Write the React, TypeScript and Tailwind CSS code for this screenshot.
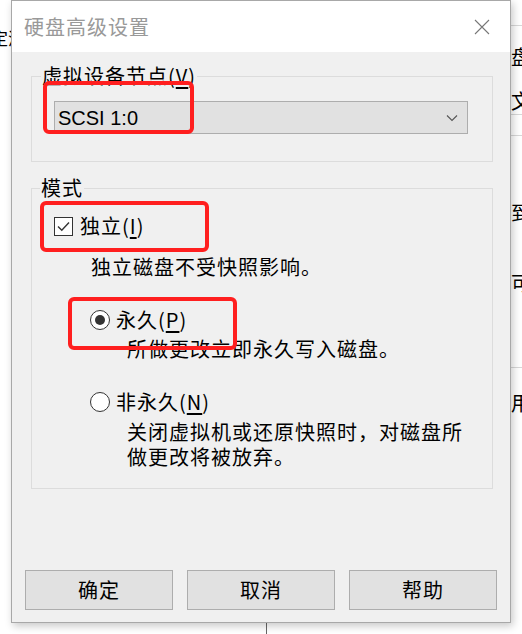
import React from 'react';

const cjk = "font-['Noto_Sans_CJK_SC',sans-serif]";

const Radio: React.FC<{ checked?: boolean }> = ({ checked }) => (
  <span className="w-[20px] h-[20px] rounded-full border border-[#333] bg-white flex items-center justify-center shrink-0">
    {checked && <span className="w-[10px] h-[10px] rounded-full bg-[#333]" />}
  </span>
);

const App: React.FC = () => {
  return (
    <div className={`relative w-[522px] h-[634px] bg-white overflow-hidden text-black ${cjk}`}>
      {/* page behind the dialog */}
      <span className="absolute left-[-9px] top-[28px] text-[17px] leading-[20px]">定涉</span>
      <div className="absolute left-[510px] top-[25px] w-[12px] h-px bg-[#d8d8d8]" />
      <div className="absolute left-[510px] top-[114px] w-[12px] h-px bg-[#d8d8d8]" />
      <div className="absolute left-[510px] top-[135px] w-[12px] h-px bg-[#d8d8d8]" />
      <div className="absolute left-[510px] top-[367px] w-[12px] h-px bg-[#d8d8d8]" />
      <span className="absolute left-[511px] top-[46px] text-[20px] leading-[22px]">盘</span>
      <span className="absolute left-[511px] top-[90px] text-[20px] leading-[22px]">文</span>
      <span className="absolute left-[511px] top-[202px] text-[20px] leading-[22px]">到</span>
      <span className="absolute left-[511px] top-[272px] text-[20px] leading-[22px]">可</span>
      <span className="absolute left-[511px] top-[392px] text-[20px] leading-[22px]">用</span>
      <div className="absolute left-[266px] top-[620px] w-px h-[14px] bg-[#666]" />

      {/* dialog window */}
      <div className="absolute left-[11px] top-0 w-[500px] h-[623px] border border-[#a8a8a8] bg-[#f0f0f0] shadow-[2px_3px_8px_rgba(0,0,0,0.22)] flex flex-col">
        <div className="h-[51px] bg-white flex items-center justify-between pl-[12px] pr-[20px] shrink-0">
          <span className="text-[20px] tracking-[1px] text-[#999] leading-[26px]">硬盘高级设置</span>
          <svg width="16" height="16" viewBox="0 0 16 16" className="mt-[1px]">
            <path d="M1 1 L15 15 M15 1 L1 15" stroke="#777" strokeWidth="1.1" fill="none" />
          </svg>
        </div>

        <div className="flex-1 flex flex-col px-[19px] pt-[11px] text-[20px] tracking-[1px]">
          <fieldset className="border border-[#dcdcdc] pl-[22px] pr-[24px] pt-[12px] pb-[27px] ml-0 w-[462px]">
            <legend className="ml-[-13px] px-[1px] leading-[26px]">
              虚拟设备节点(<u className="underline-offset-[3px]">V</u>)
            </legend>
            <div className="h-[33px] bg-[#e1e1e1] border border-[#adadad] flex items-center justify-between pl-[3px] pr-[9px]">
              <span className="font-['Liberation_Sans',sans-serif] text-[20px] tracking-normal">SCSI 1:0</span>
              <svg width="12" height="8" viewBox="0 0 12 8">
                <path d="M1 1.5 L6 6.5 L11 1.5" stroke="#555" strokeWidth="1.1" fill="none" />
              </svg>
            </div>
          </fieldset>

          <fieldset className="mt-[13px] border border-[#dcdcdc] pl-[22px] pr-[10px] pt-[12px] pb-[19px] w-[462px]">
            <legend className="ml-[-14px] px-[1px] leading-[26px]">模式</legend>

            <div className="flex items-center h-[26px]">
              <span className="w-[19px] h-[19px] border border-[#333] bg-white flex items-center justify-center shrink-0">
                <svg width="15" height="15" viewBox="0 0 15 15">
                  <path d="M2 7.5 L5.8 11.2 L13 3.6" stroke="#333" strokeWidth="1.4" fill="none" />
                </svg>
              </span>
              <span className="ml-[7px] leading-[26px]">
                独立(<u className="underline-offset-[3px]">I</u>)
              </span>
            </div>
            <p className="mt-[15px] ml-[37px] leading-[26px]">独立磁盘不受快照影响。</p>

            <div className="mt-[27px] ml-[36px] flex items-center h-[26px]">
              <Radio checked />
              <span className="ml-[6px] leading-[26px]">
                永久(<u className="underline-offset-[3px]">P</u>)
              </span>
            </div>
            <p className="mt-[3px] ml-[73px] leading-[26px]">所做更改立即永久写入磁盘。</p>

            <div className="mt-[27px] ml-[36px] flex items-center h-[26px]">
              <Radio />
              <span className="ml-[6px] leading-[26px]">
                非永久(<u className="underline-offset-[3px]">N</u>)
              </span>
            </div>
            <p className="mt-[4px] ml-[73px] leading-[25px]">
              关闭虚拟机或还原快照时，对磁盘所
              <br />
              做更改将被放弃。
            </p>
          </fieldset>

          <div className="flex-1" />
        </div>

        <div className="flex gap-[14px] px-[13px] pb-[12px] shrink-0">
          <button className="w-[148px] h-[40px] bg-[#e1e1e1] border border-[#adadad] text-[20px] tracking-[1px]">确定</button>
          <button className="w-[148px] h-[40px] bg-[#e1e1e1] border border-[#adadad] text-[20px] tracking-[1px]">取消</button>
          <button className="w-[148px] h-[40px] bg-[#e1e1e1] border border-[#adadad] text-[20px] tracking-[1px]">帮助</button>
        </div>
      </div>

      {/* red annotation boxes */}
      <div className="absolute left-[43px] top-[81px] w-[151px] h-[53px] border-[4px] border-[#ff1f1f] rounded-[6px]" />
      <div className="absolute left-[40px] top-[201px] w-[169px] h-[51px] border-[4px] border-[#ff1f1f] rounded-[6px]" />
      <div className="absolute left-[68px] top-[297px] w-[169px] h-[53px] border-[4px] border-[#ff1f1f] rounded-[6px]" />
    </div>
  );
};

export default App;
